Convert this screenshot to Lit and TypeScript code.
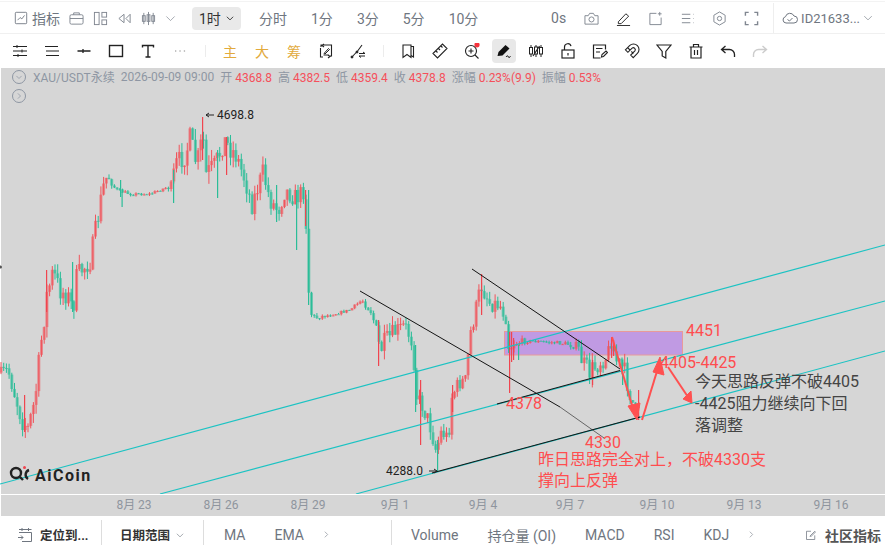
import { LitElement, css, html, svg } from "lit";
import { customElement } from "lit/decorators.js";

const icon = (body: unknown, size = 16) => html`<svg class="ic" width=${size} height=${size} viewBox="0 0 16 16">${body}</svg>`;

const topLeft = [
  svg`<rect x="1.5" y="1.5" width="13" height="13" rx="1"/><path d="M4 10.5l3-3 2 1.5 3-4"/>`,
];
const topTools = [
  svg`<rect x="1" y="4" width="14" height="10" rx="1.5"/><path d="M5 4V2h6v2M1 8h14"/>`,
  svg`<rect x="1.5" y="1.5" width="5" height="13"/><rect x="9.5" y="1.5" width="5" height="5"/><rect x="9.5" y="9.5" width="5" height="5"/>`,
  svg`<path d="M7.5 3.5L2 8l5.500 4.500zM14 3.500L9.500 8l4.500 4.500z"/>`,
  svg`<path d="M3 2v12M8 1v14M13 2v12"/><rect x="1.500" y="5" width="3" height="6"/><rect x="6.500" y="4" width="3" height="7"/><rect x="11.500" y="5" width="3" height="6"/>`,
];
const topRight = [
  svg`<path d="M1 5h3.500l1.500-2.500h4L11.500 5H15v9H1z"/><circle cx="8" cy="9" r="2.700"/>`,
  svg`<path d="M2.500 11.500L10.500 3l3 2.500-8 8H2.500zM1 15.500h14" stroke="#222"/>`,
  svg`<path d="M9 2.500H2v12h12V7"/><path d="M12.500 1v4M10.500 3h4"/>`,
  svg`<path d="M2 3.500h9M2 8h9M2 12.500h9M14 3.500h.500M14 8h.500M14 12.500h.500"/>`,
  svg`<path d="M8 1l6 3.500v7L8 15l-6-3.500v-7z"/><circle cx="8" cy="8" r="2.300"/>`,
  svg`<path d="M1.500 5V1.500H5M11 1.500h3.500V5M14.500 11v3.500H11M5 14.500H1.500V11" stroke-width="1.500"/>`,
];

const draw1 = [
  svg`<path d="M1 3.500h14M1 8h14M1 12.500h14M5 2v3M10 6.500v3M6 11v3"/>`,
  svg`<path d="M2 3.500h12M2 8h12M2 12.500h12M1 3.500h1M14 8h1M14 12.500h1" stroke-width="1.200"/>`,
  svg`<path d="M1.500 8h13M7 6v4" stroke-width="1.300"/>`,
  svg`<rect x="1.500" y="2.500" width="13" height="11" stroke-width="1.400"/>`,
  svg`<path d="M2.500 4.500V2.500h11v2M8 2.500V14M5.500 14h5" stroke-width="1.400"/>`,
  svg`<path d="M3 8h1.300M7.400 8h1.300M11.800 8h1.300" stroke="#888"/>`,
];
const draw2 = [
  svg`<path d="M3 4V2h10.500v11H11M5 14H2.500V5M6 1L4 2.500 6 4M10 12l2 1.500-2 1.500" stroke-width="1.100"/><path d="M6 10.500L10.500 5.500l1 1L7 11zM5.500 12h5" stroke-width="1"/>`,
  svg`<path d="M1.500 14.500L8 7.500l4-5.500" stroke-width="1.100"/><circle cx="2" cy="14" r="1" fill="#222"/><circle cx="7" cy="9" r="1" fill="#222"/><path d="M9 10.500h6M13 9l2 1.500M9 13h6M11 14.500L9 13" stroke-width="1"/>`,
];
const draw3 = [
  svg`<path d="M3 14.500V2h8v12.500L7 11.500z" stroke-width="1.100"/><path d="M11 3.500h2.500v10.500l-2.500-1.500" stroke-width="1.100"/>`,
  svg`<path d="M1 10.500L10.500 1 15 5.500 5.500 15zM4 8l1.500 1.500M6.500 5.500L8 7M9 3l1.500 1.500" stroke-width="1.100"/>`,
  svg`<circle cx="7" cy="8" r="5.500" stroke-width="1.100"/><path d="M11 12l3.500 3.500M4.500 8h5M7 5.500v5" stroke-width="1.100"/><circle cx="13" cy="1.800" r="2.600" fill="#f5323c" stroke="none"/>`,
];
const draw4 = [
  svg`<path d="M3 2v2.500M3 11v3M8 2v2M8 11v3M13 2v2.500M13 11v3" stroke-width="1"/><rect x="1.500" y="4.500" width="3" height="6.500" stroke-width="1"/><rect x="6.500" y="4" width="3" height="7" stroke-width="1"/><rect x="11.500" y="4.500" width="3" height="6.500" stroke-width="1"/><path d="M5 13L11.500 3" stroke-width="1.200"/>`,
  svg`<rect x="2" y="7" width="12" height="8" stroke-width="1.200"/><path d="M4.500 7V4a3.300 3.300 0 0 1 6.500-.800M8 10v2.500" stroke-width="1.200"/>`,
  svg`<path d="M13.500 6.500V2h-12v13h7M4 5.500h6.500M4 9h4" stroke-width="1.200"/><path d="M9.500 14l.500-2.500 4-3.500 1.500 1.500-4 4z" stroke-width="1.100"/>`,
  svg`<path d="M1.400 6.800L5.600 2.600A5.500 5.500 0 0 1 13.400 10.400L9.200 14.600 6.700 12.100 10.900 7.900A2 2 0 0 0 8.100 5.100L3.900 9.300zM3.600 4.600L6 7M7.400 8.400l2 2.500" stroke-width="1.100"/>`,
  svg`<path d="M1 2h14L9.800 8.500V15L6.200 13V8.500z" stroke-width="1.200"/>`,
  svg`<path d="M1.500 4h13M5.500 4V1.500h5V4M3 4v11h10V4M6.500 7v5M9.500 7v5" stroke-width="1.200"/>`,
  svg`<path d="M5.500 3L1.500 6.500l4 3.500M1.500 6.500h8a5 5 0 0 1 5 5V14" stroke-width="1.300"/>`,
];

const stops: number[][] = [
  [0, 373, 4], [8, 370, 5], [15, 395, 7], [22, 420, 8], [28, 428, 6], [35, 400, 8], [42, 335, 8], [47, 295, 9], [53, 272, 8],
  [60, 290, 8], [68, 296, 7], [73, 310, 8], [77, 275, 8], [84, 268, 6], [90, 262, 7], [95, 235, 8], [100, 205, 8],
  [105, 178, 5], [109, 178, 3], [116, 190, 2], [130, 194, 1.500], [150, 194, 1.500], [165, 188, 1.500], [172, 186, 4],
  [175, 165, 7], [185, 155, 8], [190, 140, 9], [197, 165, 9], [203, 135, 9], [206, 175, 10], [215, 167, 9], [224, 140, 8],
  [236, 155, 8], [245, 180, 7], [252, 205, 7], [263, 172, 7], [270, 200, 7], [278, 210, 8], [285, 190, 7], [296, 198, 7],
  [305, 190, 6], [308, 285, 4], [312, 318, 3], [330, 315, 1.500], [350, 310, 1.500], [362, 300, 2], [372, 312, 4],
  [380, 350, 9], [387, 340, 7], [395, 332, 7], [405, 325, 5], [413, 345, 5], [416, 395, 5], [422, 405, 6], [430, 425, 7],
  [436, 450, 6], [442, 430, 7], [448, 440, 7], [452, 395, 6], [460, 382, 6], [466, 380, 5], [470, 335, 6], [476, 310, 7],
  [481, 285, 7], [490, 303, 6], [500, 305, 6], [506, 318, 5], [509, 350, 5], [513, 343, 4], [530, 341, 1.500], [560, 343, 2],
  [578, 346, 3], [583, 365, 8], [590, 372, 8], [600, 362, 7], [607, 356, 6], [611, 342, 4], [617, 362, 7], [624, 370, 8],
  [630, 395, 5], [636, 412, 3], [640, 410, 3],
];

const spikes: [number, number, number, boolean][] = [
  [202, 117, 160, true], [120, 180, 197, false], [121.500, 192, 207, false], [217, 150, 198, false], [308, 190, 305, false],
  [173, 170, 203, false], [226, 137, 175, true], [420, 380, 445, true], [378, 320, 366, true], [437, 440, 472, false],
  [415, 345, 412, false], [452, 385, 412, true], [509, 332, 393, true], [511, 332, 362, true], [513, 338, 360, true],
  [481, 274, 315, true], [518, 345, 360, false], [611, 337, 358, true], [613, 340, 356, true], [622, 360, 385, false],
  [638, 390, 420, true], [592, 360, 385, true], [276, 185, 222, false], [296, 190, 250, false], [305, 190, 226, true],
  [72, 262, 312, false], [46, 270, 312, true], [24, 395, 432, true],
];

function priceAt(x: number) {
  for (let i = 1; i < stops.length; i++) {
    const [x0, y0, v0] = stops[i - 1];
    const [x1, y1, v1] = stops[i];
    if (x <= x1) {
      const t = (x - x0) / (x1 - x0);
      return [y0 + (y1 - y0) * t, v0 + (v1 - v0) * t];
    }
  }
  return [410, 3];
}

// fixed seed so every render gives the same candles
let seed = 7;
const rnd = () => {
  seed = (seed * 16807) % 2147483647;
  return seed / 2147483647;
};

function candles() {
  const out: unknown[] = [];
  let prev = priceAt(1)[0];
  for (let x = 1; x < 640; x += 2.700) {
    const [p, raw] = priceAt(x);
    const v = raw < 2.500 ? raw : raw * 1.400;
    const close = p + (rnd() - 0.500) * v * 2;
    const top = Math.min(prev, close);
    const bot = Math.max(prev, close);
    const up = close < prev;
    const col = up ? "#f0555c" : "#2bbd98";
    const hi = top - rnd() * v * 0.900;
    const lo = bot + rnd() * v * 0.900;
    out.push(svg`<rect x=${x - 0.500} y=${hi} width="1" height=${lo - hi} fill=${col}/>
      <rect x=${x - 1.500} y=${top} width="3" height=${Math.max(bot - top, 1)} fill=${col} opacity="0.600"/>`);
    prev = close;
  }
  for (const [x, a, b, up] of spikes) {
    out.push(svg`<rect x=${x} y=${a} width="1.200" height=${b - a} fill=${up ? "#f0454f" : "#2bbd98"}/>`);
  }
  return out;
}
const candleMarks = candles();

const dates: [number, string][] = [
  [134, "8月 23"], [221, "8月 26"], [308, "8月 29"], [395, "9月 1"], [483, "9月 4"],
  [570, "9月 7"], [657, "9月 10"], [744, "9月 13"], [831, "9月 16"],
];

@customElement("app-root")
export class AppRoot extends LitElement {
  render() {
    return html`
      <div class="toolbar">
        <span class="btn first">${icon(topLeft[0], 14)}</span>
        <span class="tab label">指标</span>
        <span class="tools">${topTools.map((t) => icon(t, 15))}</span>
        <span class="chev">${icon(svg`<path d="M2 5l6 6 6-6"/>`, 11)}</span>
        <span class="pill">1时 ${icon(svg`<path d="M3 6l5 5 5-5" stroke="#333" stroke-width="1.500"/>`, 10)}</span>
        <span class="tabs">
          <span>分时</span><span>1分</span><span>3分</span><span>5分</span><span>10分</span>
        </span>
        <span class="spring"></span>
        <span class="secs">0s</span>
        <span class="tools right">${topRight.map((t) => icon(t, 15))}</span>
        <span class="account">
          ${icon(svg`<path d="M4 13a3.200 3.200 0 0 1-.500-6.300A4.500 4.500 0 0 1 12 6a3.500 3.500 0 0 1 0 7zM5.500 9.500l2 1.500 3-3"/>`, 16)}
          <span>ID21633...</span>
          ${icon(svg`<path d="M2 5l6 6 6-6"/>`, 10)}
        </span>
      </div>

      <div class="drawbar">
        ${draw1.map((t) => html`<span class="slot">${icon(t, 16)}</span>`)}
        <span class="sep"></span>
        <span class="slot gold">主</span><span class="slot gold">大</span><span class="slot gold">筹</span>
        ${draw2.map((t) => html`<span class="slot">${icon(t, 16)}</span>`)}
        <span class="sep"></span>
        ${draw3.map((t) => html`<span class="slot">${icon(t, 16)}</span>`)}
        <span class="slot"><span class="active">
          <svg width="16" height="16" viewBox="0 0 16 16"><path d="M1.500 13l1-4L9.500 2l4 3.500-7 7z" fill="#111"/><path d="M10 14c1-1.500 2-1.500 2.500 0s1.500 0 2-1" fill="none" stroke="#111"/></svg>
        </span></span>
        ${draw4.map((t) => html`<span class="slot">${icon(t, 16)}</span>`)}
        <span class="slot faded">${icon(svg`<path d="M10.500 3l4 3.500-4 3.500M14.500 6.500h-8a5 5 0 0 0-5 5V14" stroke-width="1.400"/>`, 16)}</span>
      </div>

      <div class="chart">
        <svg class="plot" width="885" height="448" viewBox="0 68 885 448">
          <rect x="1" y="68" width="884" height="448" fill="#d6d6d6"/>
          <rect x="504.500" y="331.500" width="178" height="23.500" fill="#c09ae3" stroke="#e89a9a"/>
          ${candleMarks}
          <g stroke="#1cc3c3" stroke-width="1.200">
            <path d="M0 484L885 245"/>
            <path d="M160 494L885 301"/>
            <path d="M356 494L885 351"/>
          </g>
          <g stroke="#141414" stroke-width="1" fill="none">
            <path d="M360 291L560 407"/>
            <path d="M560 407L604 438" stroke="#666"/>
            <path d="M472 269L620 369"/>
            <path d="M497 404L620 370.500" stroke-width="1.100"/>
            <path d="M432 473L640 417" stroke-width="1.100"/>
          </g>
          <g stroke="#ff5050" fill="#ff5050">
            <path d="M612 337L634 412" fill="none" stroke-width="2"/>
            <path d="M628 406L637 420 640 403z"/>
            <path d="M642 420L658 368" fill="none" stroke-width="2"/>
            <path d="M653 372L660 357 664 375z"/>
            <path d="M668 367L688 397" fill="none" stroke-width="2"/>
            <path d="M683 399L692 403 691 391z"/>
          </g>
          <g class="note red">
            <text x="686" y="336">4451</text>
            <text x="660" y="368">4405-4425</text>
            <text x="506" y="409">4378</text>
            <text x="585" y="448">4330</text>
            <text x="538" y="465">昨日思路完全对上，不破4330支</text>
            <text x="538" y="486">撑向上反弹</text>
          </g>
          <g class="note dark">
            <text x="695" y="387">今天思路反弹不破4405</text>
            <text x="695" y="409">-4425阻力继续向下回</text>
            <text x="695" y="431">落调整</text>
          </g>
          <g class="price">
            <path d="M214 115h-8M209 113l-3 2 3 2M429 471h8M434 469l3 2-3 2" fill="none" stroke="#222"/>
            <text x="217" y="119">4698.8</text>
            <text x="386" y="475">4288.0</text>
          </g>
          <circle cx="0.500" cy="267" r="1.500" fill="#555"/>
          <g class="logo">
            <circle cx="16" cy="473" r="5" fill="none" stroke="#222" stroke-width="2.400"/>
            <path d="M20 477l3 3" stroke="#222" stroke-width="2.400"/>
            <path d="M29 470a5 5 0 0 0-1 9" fill="none" stroke="#222" stroke-width="2.400"/>
            <circle cx="24.500" cy="467.500" r="1.500" fill="#f0454f"/>
            <text x="35" y="481">AiCoin</text>
          </g>
          <path d="M0 494.500H885" stroke="#fff"/>
          <g class="axis">
            ${dates.map(([x, t]) => svg`<text x=${x} y="509" text-anchor="middle">${t}</text>`)}
          </g>
        </svg>
        <div class="legend">
          <span class="circ">${icon(svg`<path d="M4.500 6.500L8 10l3.500-3.500"/>`, 12)}</span>
          <span>XAU/USDT永续</span>
          <span>2026-09-09 09:00</span>
          <span>开 <b>4368.8</b></span>
          <span>高 <b>4382.5</b></span>
          <span>低 <b>4359.4</b></span>
          <span>收 <b>4378.8</b></span>
          <span>涨幅 <b>0.23%(9.9)</b></span>
          <span>振幅 <b>0.53%</b></span>
        </div>
        <span class="circ second">${icon(svg`<path d="M6.500 4.500L10 8l-3.500 3.500"/>`, 12)}</span>
      </div>

      <div class="bottom">
        <span class="cell locate">
          ${icon(svg`<path d="M2 5.500h12.500V14.500H5M2 2.500h12.500M5 1v3M11.500 1v3M1 10.500h5M4 8.500l2 2-2 2"/>`, 16)}
          <b>定位到...</b>
        </span>
        <span class="cell range"><b>日期范围</b>${icon(svg`<path d="M3 6l5 5 5-5"/>`, 10)}</span>
        <span class="cell inds one">
          <span>MA</span><span>EMA</span><span class="more">${icon(svg`<path d="M5 3l5 5-5 5"/>`, 9)}</span>
        </span>
        <span class="cell inds two">
          <span>Volume</span><span>持仓量 (OI)</span><span>MACD</span><span>RSI</span><span>KDJ</span><span class="more">${icon(svg`<path d="M5 3l5 5-5 5"/>`, 9)}</span>
        </span>
        <span class="spring"></span>
        <span class="community">
          ${icon(svg`<path d="M13 8.500V14H2V3h6M6.500 9.500L13 3l1 1-6.500 6.500z"/>`, 12)}
          <b>社区指标</b>
        </span>
      </div>
    `;
  }

  static styles = css`
    :host {
      display: flex;
      flex-direction: column;
      width: 885px;
      height: 545px;
      overflow: hidden;
      background: #fff;
      font-family: Roboto, "Noto Sans CJK SC", sans-serif;
      color: #6f7680;
    }

    .ic {
      fill: none;
      stroke: currentColor;
      stroke-width: 1;
      flex: none;
    }

    .spring {
      flex: 1;
    }

    .toolbar {
      display: flex;
      align-items: center;
      height: 30px;
      margin-top: 1px;
      padding-top: 1px;
      border-top: 1px solid #f3f3f3;
      border-bottom: 1px solid #f0f0f0;
      font-size: 14px;
    }

    .btn.first {
      display: flex;
      margin-left: 14px;
    }

    .label {
      margin-left: 4px;
    }

    .tools {
      display: flex;
      align-items: center;
      gap: 9px;
      margin-left: 9px;
      color: #808690;
    }

    .tools.right {
      gap: 17px;
      margin-left: 18px;
      margin-right: 14px;
    }

    .chev {
      display: flex;
      margin-left: 9px;
      color: #808690;
    }

    .pill {
      display: flex;
      align-items: center;
      gap: 4px;
      width: 49px;
      height: 23px;
      margin-left: 16px;
      padding-left: 7px;
      box-sizing: border-box;
      border-radius: 4px;
      background: #e9e9e9;
      color: #333;
    }

    .tabs {
      display: flex;
      gap: 24px;
      margin-left: 18px;
    }

    .account {
      display: flex;
      align-items: center;
      gap: 3px;
      height: 30px;
      padding: 0 12px 0 8px;
      border-left: 1px solid #eee;
      font-size: 13px;
    }

    .drawbar {
      display: flex;
      align-items: center;
      height: 34px;
      padding-left: 4px;
      color: #222;
    }

    .slot {
      display: flex;
      align-items: center;
      justify-content: center;
      width: 32px;
      height: 24px;
      flex: none;
    }

    .gold {
      color: #e2aa3c;
      font-size: 14px;
    }

    .faded {
      color: #ccc;
    }

    .sep {
      width: 18px;
      height: 12px;
      flex: none;
      background: linear-gradient(#ececec, #ececec) center / 1px 100% no-repeat;
    }

    .active {
      display: flex;
      align-items: center;
      justify-content: center;
      width: 24px;
      height: 24px;
      border-radius: 4px;
      background: #e8e8e8;
    }

    .chart {
      position: relative;
      height: 448px;
      flex: none;
    }

    .plot {
      display: block;
    }

    .note text {
      font-size: 16px;
    }

    .red text {
      fill: #ff4d4f;
    }

    .dark text {
      fill: #444;
    }

    .price text {
      font-size: 12px;
      fill: #222;
    }

    .logo text {
      font-size: 16px;
      font-weight: 700;
      letter-spacing: 1.500px;
      fill: #222;
    }

    .axis text {
      font-size: 12px;
      fill: #8f959e;
    }

    .legend {
      position: absolute;
      top: 0;
      left: 12px;
      display: flex;
      align-items: center;
      gap: 6px;
      font-size: 12px;
      color: #8e96a3;
    }

    .legend b {
      font-weight: 400;
      color: #f5505b;
    }

    .circ {
      display: flex;
      align-items: center;
      justify-content: center;
      width: 14px;
      height: 14px;
      margin-right: 1px;
      border: 1px solid #8e96a3;
      border-radius: 50%;
      box-sizing: border-box;
      color: #8e96a3;
    }

    .circ.second {
      position: absolute;
      top: 21px;
      left: 12px;
    }

    .bottom {
      display: flex;
      align-items: center;
      height: 25px;
      margin-top: 4px;
      font-size: 14px;
    }

    .bottom b {
      color: #333;
      font-size: 12.500px;
      font-weight: 700;
    }

    .cell {
      display: flex;
      align-items: center;
      height: 25px;
      padding-top: 4px;
      box-sizing: border-box;
      border-right: 1px solid #ddd;
    }

    .locate {
      width: 102px;
      padding-left: 17px;
      gap: 7px;
    }

    .range {
      width: 102px;
      padding-left: 18px;
      gap: 5px;
    }

    .inds {
      gap: 29px;
    }

    .more {
      display: flex;
      margin-left: -11px;
    }

    .one {
      width: 188px;
      padding-left: 20px;
    }

    .two {
      border-right: none;
      padding-left: 19px;
      gap: 29px;
    }

    .community {
      display: flex;
      align-items: center;
      gap: 8px;
      padding: 4px 4px 0 0;
    }

    .community b {
      font-size: 14px;
      color: #555;
    }
  `;
}

declare global {
  interface HTMLElementTagNameMap {
    "app-root": AppRoot;
  }
}
